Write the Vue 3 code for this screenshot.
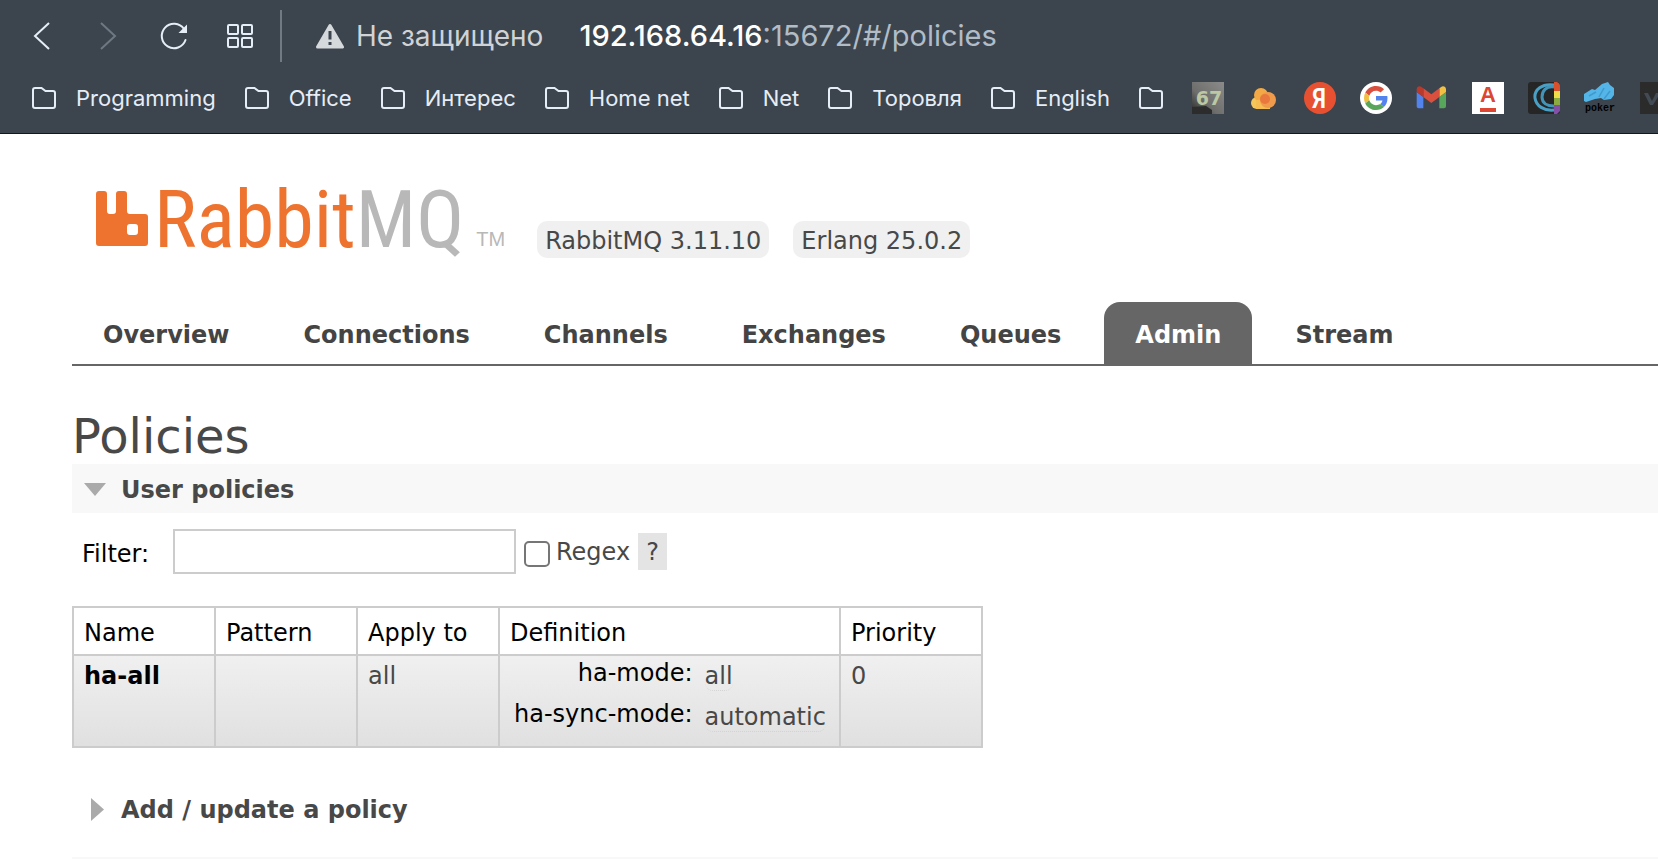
<script setup>
import { ref } from 'vue'

const folders = ['Programming', 'Office', 'Интерес', 'Home net', 'Net', 'Торовля', 'English', '']
const tabs = ['Overview', 'Connections', 'Channels', 'Exchanges', 'Queues', 'Admin', 'Stream']
const active = ref('Admin')
const filter = ref('')
const regex = ref(false)
const policies = [
  {
    name: 'ha-all',
    pattern: '',
    applyTo: 'all',
    definition: [
      { key: 'ha-mode', value: 'all' },
      { key: 'ha-sync-mode', value: 'automatic' }
    ],
    priority: 0
  }
]
</script>

<template>
  <div class="window">
    <header class="chrome">
      <div class="toolbar">
        <div class="nav-buttons">
          <button type="button" class="icon-button" aria-label="Back">
            <svg width="28" height="32" viewBox="0 0 28 32"><path d="M21 3 7 16l14 13" fill="none" stroke="#e6edf7" stroke-width="2" /></svg>
          </button>
          <button type="button" class="icon-button" aria-label="Forward">
            <svg width="28" height="32" viewBox="0 0 28 32"><path d="m7 3 14 13L7 29" fill="none" stroke="#6d7883" stroke-width="2" /></svg>
          </button>
          <button type="button" class="icon-button" aria-label="Reload">
            <svg width="28" height="32" viewBox="0 0 28 32">
              <path d="M25.500 20A12.200 12.200 0 1 1 24 9" fill="none" stroke="#e6edf7" stroke-width="2" stroke-linecap="round" />
              <path d="M27 4.500V13H18.500Z" fill="#e6edf7" />
            </svg>
          </button>
          <button type="button" class="icon-button" aria-label="Tiles">
            <svg width="28" height="32" viewBox="0 0 28 32" fill="none" stroke="#e6edf7" stroke-width="2">
              <rect x="2" y="5" width="10" height="9" rx="1" /><rect x="16" y="5" width="10" height="9" rx="1" />
              <rect x="2" y="18" width="10" height="9" rx="1" /><rect x="16" y="18" width="10" height="9" rx="1" />
            </svg>
          </button>
        </div>
        <span class="divider"></span>
        <button type="button" class="security">
          <svg width="28" height="26" viewBox="0 0 28 26">
            <path d="M14 2.500 26.500 24h-25Z" fill="#d5d9dc" stroke="#d5d9dc" stroke-width="3" stroke-linejoin="round" />
            <path d="M12.500 8h3v8.500h-3zM12.500 19h3v3h-3z" fill="#3c454e" />
          </svg>
          <span>Не защищено</span>
        </button>
        <div class="address"><span class="host">192.168.64.16</span>:15672/#/policies</div>
      </div>

      <nav class="bookmarks" aria-label="Bookmarks">
        <a v-for="(name, i) in folders" :key="i" href="#" class="folder" :aria-label="name || 'Folder'">
          <svg width="24" height="24" viewBox="0 0 24 24">
            <path d="M1 4a2 2 0 0 1 2-2h6.500l4 3H21a2 2 0 0 1 2 2v13a2 2 0 0 1-2 2H3a2 2 0 0 1-2-2Z" fill="none" stroke="#e6edf7" stroke-width="2" />
          </svg>
          <span v-if="name">{{ name }}</span>
        </a>
        <div class="favicons">
          <a href="#" aria-label="67">
            <svg width="32" height="32" viewBox="0 0 32 32">
              <defs>
                <linearGradient id="smoke" x1="0" y1="1" x2="1" y2="0">
                  <stop offset="0" stop-color="#262626" /><stop offset=".4" stop-color="#6e6e6c" /><stop offset="1" stop-color="#8b8b8b" />
                </linearGradient>
              </defs>
              <rect width="32" height="32" fill="url(#smoke)" />
              <path d="M0 25 14 24l6 4v4H0Z" fill="#2c2c2c" />
              <text x="17" y="23" text-anchor="middle" class="tile-number">67</text>
            </svg>
          </a>
          <a href="#" aria-label="Cloud">
            <svg width="32" height="32" viewBox="0 0 32 32">
              <circle cx="9" cy="21" r="6" fill="#f5c65a" /><circle cx="13" cy="13" r="7" fill="#f3a946" />
              <rect x="8" y="18" width="14" height="9" fill="#f5bd52" /><circle cx="20" cy="18" r="8" fill="#f09a4c" />
              <circle cx="17" cy="17" r="5" fill="#e8783d" />
            </svg>
          </a>
          <a href="#" aria-label="Yandex">
            <svg width="32" height="32" viewBox="0 0 32 32">
              <circle cx="16" cy="16" r="16" fill="#e75131" /><text x="15" y="26" text-anchor="middle" class="ya">Я</text>
            </svg>
          </a>
          <a href="#" aria-label="Google">
            <svg width="32" height="32" viewBox="0 0 32 32">
              <circle cx="16" cy="16" r="16" fill="#fff" />
              <svg x="4" y="4" width="24" height="24" viewBox="0 0 48 48">
                <path fill="#d9503f" d="M24 9.500c3.540 0 6.710 1.220 9.210 3.600l6.850-6.850C35.900 2.380 30.470 0 24 0 14.620 0 6.510 5.380 2.560 13.220l7.980 6.190C12.430 13.720 17.740 9.500 24 9.500z" />
                <path fill="#5383ec" d="M46.980 24.550c0-1.570-.15-3.090-.38-4.550H24v9.020h12.940c-.58 2.960-2.260 5.480-4.780 7.180l7.730 6c4.510-4.180 7.090-10.360 7.090-17.650z" />
                <path fill="#f1bf42" d="M10.530 28.590A14.500 14.500 0 0 1 9.770 24c0-1.600.27-3.140.76-4.590l-7.980-6.190A23.900 23.900 0 0 0 0 24c0 3.880.92 7.540 2.560 10.780l7.970-6.190z" />
                <path fill="#58a55c" d="M24 48c6.480 0 11.930-2.130 15.890-5.810l-7.730-6c-2.150 1.450-4.920 2.300-8.160 2.300-6.260 0-11.570-4.220-13.470-9.910l-7.980 6.190C6.510 42.620 14.620 48 24 48z" />
              </svg>
            </svg>
          </a>
          <a href="#" aria-label="Gmail">
            <svg width="32" height="32" viewBox="50 29 96 96">
              <path fill="#5383ec" d="M58 108h14V74L52 59v43c0 3.320 2.690 6 6 6" />
              <path fill="#58a55c" d="M120 108h14c3.320 0 6-2.690 6-6V59l-20 15" />
              <path fill="#f1bf42" d="M120 48v26l20-15v-8c0-7.420-8.470-11.650-14.400-7.200" />
              <path fill="#d9503f" d="M72 74V48l24 18 24-18v26L96 92" />
              <path fill="#b83a2d" d="M52 51v8l20 15V48l-5.600-4.200C60.460 39.350 52 43.580 52 51" />
            </svg>
          </a>
          <a href="#" aria-label="Alfa">
            <svg width="32" height="32" viewBox="0 0 32 32">
              <rect width="32" height="32" fill="#fff" /><text x="16" y="20" text-anchor="middle" class="alfa">A</text>
              <rect x="8" y="26" width="16" height="4" fill="#dc4632" />
            </svg>
          </a>
          <a href="#" aria-label="Curves">
            <svg width="32" height="32" viewBox="0 0 32 32">
              <rect width="32" height="32" rx="3" fill="#262626" />
              <path d="M26 3C14 1 6 8 7 16c1 8 9 13 19 12" fill="none" stroke="#4a9fc4" stroke-width="3" />
              <path d="M26 5c-8-1-12 4-12 10 0 6 5 9 12 9" fill="none" stroke="#4494b8" stroke-width="3" />
              <path fill="#d9502c" d="M26 0h3q3 1 3 4v5h-6z" /><path fill="#f1dc4a" d="M26 9h6v7h-6z" />
              <path fill="#8cab3e" d="M26 16h6v7h-6z" /><path fill="#8350a8" d="M26 23h6v6l-3 3h-3z" />
            </svg>
          </a>
          <a href="#" aria-label="poker">
            <svg width="32" height="32" viewBox="0 0 32 32">
              <path d="M0 12 8 7l3 1 7-6 6-2 2 3 4 3v7l-3 4-7 1-3-2-6 1-9 3-2-1Z" fill="#54b5e8" />
              <path d="m5 14 7-4m3 5 5-9m0 11 6-8" stroke="#3f9bcc" stroke-width="1.500" />
              <text x="16" y="29" text-anchor="middle" class="poker">poker</text>
            </svg>
          </a>
          <a href="#" aria-label="W">
            <svg width="32" height="32" viewBox="0 0 32 32">
              <rect width="32" height="32" fill="#2b2b2b" /><path d="M4 11h4l4 8 4-8h12l-5 12-5-8-5 8h-3Z" fill="#424a54" />
            </svg>
          </a>
        </div>
      </nav>
    </header>

    <main class="page">
      <div class="brand">
        <a href="#" class="logo" aria-label="RabbitMQ">
          <svg width="53" height="56" viewBox="0 0 53 56">
            <path fill="#ee732e" fill-rule="evenodd" d="M3 0h5q3 0 3 3v17q0 3 3 3h3q3 0 3-3V3q0-3 3-3h5q3 0 3 3v17q0 3 3 3h15q3 0 3 3v26q0 3-3 3H3q-3 0-3-3V3q0-3 3-3ZM34 33q-3 0-3 3v5q0 3 3 3h5q3 0 3-3v-5q0-3-3-3Z" />
          </svg>
          <span class="wordmark">Rabbit<span class="mq">MQ</span></span>
          <span class="tm">TM</span>
        </a>
        <span class="version">RabbitMQ 3.11.10</span>
        <span class="version">Erlang 25.0.2</span>
      </div>

      <nav class="tabs" aria-label="Main">
        <a v-for="tab in tabs" :key="tab" href="#" :class="{ selected: tab === active }" @click.prevent="active = tab">{{ tab }}</a>
      </nav>

      <h1>Policies</h1>

      <section>
        <h2 class="open">
          <button type="button" aria-expanded="true">
            <svg width="24" height="24" viewBox="0 0 24 24"><path d="M1 5h22L12 18Z" fill="#aaa" /></svg>
            User policies
          </button>
        </h2>
        <div class="filter">
          <label for="filter" class="filter-label">Filter:</label>
          <input id="filter" v-model="filter" type="text" class="filter-input" />
          <input id="regex" v-model="regex" type="checkbox" class="check" />
          <label for="regex" class="regex-label">Regex</label>
          <button type="button" class="help">?</button>
        </div>
        <table class="list">
          <thead>
            <tr><th>Name</th><th>Pattern</th><th>Apply to</th><th class="wide">Definition</th><th>Priority</th></tr>
          </thead>
          <tbody>
            <tr v-for="p in policies" :key="p.name">
              <td><a href="#">{{ p.name }}</a></td>
              <td>{{ p.pattern }}</td>
              <td>{{ p.applyTo }}</td>
              <td class="definition">
                <dl>
                  <template v-for="d in p.definition" :key="d.key">
                    <dt>{{ d.key }}:</dt>
                    <dd><abbr>{{ d.value }}</abbr></dd>
                  </template>
                </dl>
              </td>
              <td>{{ p.priority }}</td>
            </tr>
          </tbody>
        </table>
      </section>

      <section class="closed">
        <h2>
          <button type="button" aria-expanded="false">
            <svg width="24" height="24" viewBox="0 0 24 24"><path d="M8 0v23l13-11.500Z" fill="#aaa" /></svg>
            Add / update a policy
          </button>
        </h2>
      </section>
    </main>
  </div>
</template>

<style>
body {
  margin: 0;
  background: #fff;
}
</style>

<style scoped>
.window {
  overflow: hidden;
  font: 24px/30px "DejaVu Sans", sans-serif;
  color: #484848;
}
button {
  padding: 0;
  border: 0;
  background: none;
  font: inherit;
  color: inherit;
}
a {
  color: inherit;
  text-decoration: none;
}
svg {
  display: block;
  flex: none;
}

.chrome {
  background: #3c454e;
  border-bottom: 1px solid #14181b;
  font-family: Inter, sans-serif;
}
.toolbar {
  display: flex;
  align-items: center;
  height: 72px;
  padding-left: 28px;
}
.nav-buttons {
  display: flex;
  gap: 38px;
}
.divider {
  width: 2px;
  height: 52px;
  margin: 0 34px 0 26px;
  background: #6f7a84;
}
.security {
  display: flex;
  align-items: center;
  gap: 12px;
  margin-right: 36px;
  font-size: 28px;
  color: #d0d3d6;
}
.address {
  font-size: 29px;
  color: #b1bcc7;
  white-space: nowrap;
}
.host {
  color: #fff;
  font-weight: 500;
}
.bookmarks {
  display: flex;
  align-items: center;
  gap: 29px;
  height: 52px;
  padding: 0 0 9px 32px;
  font-size: 22px;
  color: #e6edf7;
}
.folder {
  display: flex;
  flex: none;
  align-items: center;
  gap: 20px;
}
.favicons {
  display: flex;
  flex: none;
  gap: 24px;
}
.tile-number {
  font: bold 19px "DejaVu Sans", sans-serif;
  fill: #bcc8a4;
}
.ya {
  font: 500 27px "Roboto Condensed", "Roboto", sans-serif;
  fill: #fff;
}
.alfa {
  font: bold 22px "Liberation Sans", sans-serif;
  fill: #dc4632;
}
.poker {
  font: bold 10px "Liberation Mono", monospace;
  fill: #000;
}

.page {
  padding-left: 72px;
}
.brand {
  display: flex;
  align-items: flex-end;
  gap: 24px;
  height: 76px;
  padding: 48px 0 44px 24px;
}
.logo {
  display: flex;
  align-items: flex-end;
  height: 68px;
  margin-right: 8px;
}
.logo svg {
  margin-top: 1px;
  align-self: flex-start;
}
.wordmark {
  margin-left: 5px;
  font: 80px/76px "Roboto Condensed", "Roboto", sans-serif;
  color: #ee732e;
}
.mq,
.tm {
  color: #b8b8b8;
}
.tm {
  margin-left: 12px;
  font: 20px/38px "Liberation Sans", sans-serif;
}
.version {
  padding: 5px 8px 2px;
  border-radius: 10px;
  background: #f0f0f0;
}

.tabs {
  display: flex;
  gap: 12px;
  border-bottom: 2px solid #666;
  font-weight: bold;
  color: #444;
}
.tabs a {
  padding: 18px 31px 14px;
  border-radius: 16px 16px 0 0;
}
.tabs .selected {
  background: #666;
  color: #fff;
}

h1 {
  margin: 42px 0 0;
  font-size: 48px;
  line-height: 56px;
  font-weight: normal;
}
h2 {
  margin: 0;
  font-size: 24px;
}
h2.open {
  background: #f8f8f8;
}
h2 button {
  display: flex;
  align-items: center;
  gap: 14px;
  height: 49px;
  padding: 2px 0 0 11px;
  font-weight: bold;
}

.filter {
  display: flex;
  align-items: center;
  height: 45px;
  padding: 16px 0 32px 10px;
}
.filter-label {
  width: 91px;
  padding-top: 4px;
  color: #000;
}
.filter-input {
  box-sizing: border-box;
  width: 343px;
  height: 45px;
  padding: 4px 8px;
  border: 2px solid #ccc;
  font: inherit;
}
.check {
  appearance: none;
  width: 26px;
  height: 26px;
  margin: 4px 6px 0 8px;
  border: 2px solid #767676;
  border-radius: 5px;
  background: #fff;
}
.help {
  margin-left: 8px;
  padding: 4px 8px 3px;
  background: #e4e4e4;
}

.list {
  border-collapse: collapse;
}
.list th,
.list td {
  min-width: 120px;
  padding: 10px 10px 6px;
  border: 2px solid #ccc;
  text-align: left;
  vertical-align: top;
}
.list th {
  font-weight: normal;
  color: #000;
}
.list .wide {
  min-width: 319px;
}
.list tbody tr {
  background: linear-gradient(#f0f0f0, #e0e0e0);
}
.list td {
  padding: 5px 10px;
}
.list td a {
  font-weight: bold;
  color: #000;
}
.list .definition {
  padding: 2px 12px 6px 14px;
}
dl {
  display: grid;
  grid-template-columns: auto 1fr;
  column-gap: 12px;
  margin: 0;
}
dt {
  height: 41px;
  color: #000;
  text-align: right;
}
dd {
  margin: 0;
  padding-top: 3px;
}
abbr {
  border-bottom: 1px dotted #d4d4d4;
  border-radius: 8px;
}
.closed {
  margin-top: 36px;
  padding-bottom: 24px;
  border-bottom: 2px solid #f8f8f8;
}
</style>
